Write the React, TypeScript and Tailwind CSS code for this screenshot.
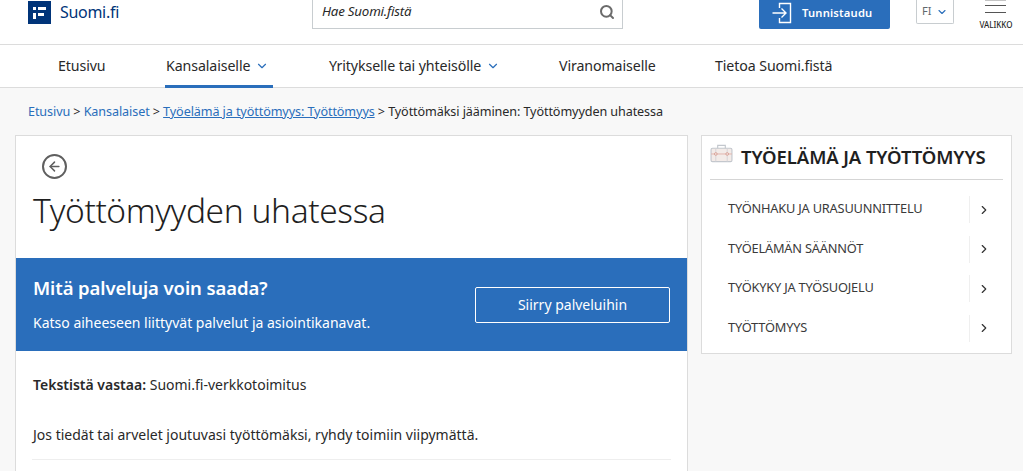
import React from 'react';
import { ChevronDown, ChevronRight, Search, ArrowLeft } from 'lucide-react';

const navItems = [
  { label: 'Etusivu', width: 'w-[47px]', left: 'ml-[58px]' },
  { label: 'Kansalaiselle', width: 'w-[108px]', left: 'ml-[60px]', open: true, active: true },
  { label: 'Yritykselle tai yhteisölle', width: 'w-[169px]', left: 'ml-[56px]', open: true },
  { label: 'Viranomaiselle', width: 'w-[96px]', left: 'ml-[61px]' },
  { label: 'Tietoa Suomi.fistä', width: 'w-[118px]', left: 'ml-[60px]' },
];

const topics = ['TYÖNHAKU JA URASUUNNITTELU', 'TYÖELÄMÄN SÄÄNNÖT', 'TYÖKYKY JA TYÖSUOJELU', 'TYÖTTÖMYYS'];

const BriefcaseIcon = () => (
  <svg width="23" height="19" viewBox="0 0 24 20" fill="none" className="shrink-0 -mt-[8px]">
    <rect x="1" y="4.5" width="22" height="14" rx="1.5" fill="#f3ebe8" stroke="#c3c7cd" strokeWidth="1.2" />
    <path d="M8 4.5V1.5h8v3" stroke="#c3c7cd" strokeWidth="1.2" />
    <path d="M1 10.5h22" stroke="#e2b4ac" strokeWidth="1" />
    <path d="M6 4.5v14M18 4.5v14" stroke="#d5d3d6" strokeWidth="1" />
    <circle cx="6" cy="10.5" r="1.4" fill="#f3ebe8" stroke="#d99e94" />
    <circle cx="18" cy="10.5" r="1.4" fill="#f3ebe8" stroke="#d99e94" />
  </svg>
);

const LoginIcon = () => (
  <svg width="22" height="22" viewBox="0 0 22 22" fill="none" stroke="#fff" strokeWidth="1.4">
    <path d="M7.5 6V1.5h11v19h-11V16" />
    <path d="M0.5 11h13M9.5 6.5l4.5 4.5-4.5 4.5" />
  </svg>
);

const App: React.FC = () => {
  return (
    <div className="w-[1023px] h-[471px] overflow-hidden bg-[#f8f8f8] font-['Noto_Sans',sans-serif] text-[#292929]">
      <header className="h-[45px] bg-white border-b border-[#dcdcdc] flex items-start">
        <div className="ml-[28px] mt-px w-[23px] h-[23px] bg-[#003479] flex flex-col justify-center gap-[3px] pl-[5px]">
          <div className="flex gap-[2px]">
            <span className="w-[3px] h-[3px] bg-white" />
            <span className="w-[8px] h-[3px] bg-white" />
          </div>
          <div className="flex gap-[2px]">
            <span className="w-[3px] h-[6px] bg-white" />
            <span className="w-[6px] h-[3px] bg-white" />
          </div>
        </div>
        <span className="ml-[9px] text-[16px] leading-[24px] text-[#003479] tracking-[-0.3px]">Suomi.fi</span>

        <div className="ml-[193px] w-[311px] h-[29px] bg-white border-x border-b border-[#c8cdd0] flex items-center justify-between pl-[9px] pr-[7px] pb-[5px]">
          <span className="italic text-[13.3px] tracking-[-0.2px] text-[#292929]">Hae Suomi.fistä</span>
          <Search size={16} strokeWidth={3} className="text-[#6b6b6b]" />
        </div>

        <button className="ml-[136px] w-[131px] h-[29px] bg-[#2a6ebb] rounded-b-[2px] flex items-center pl-[13px] gap-[8px] pb-[3px]">
          <LoginIcon />
          <span className="text-[11.2px] font-semibold tracking-[0.2px] text-white">Tunnistaudu</span>
        </button>

        <div className="ml-[26px] w-[38px] h-[24px] bg-white border-x border-b border-[#c8cdd0] rounded-b-[2px] flex items-center pl-[5px] gap-[5px]">
          <span className="text-[11px] text-[#5f686d]">FI</span>
          <ChevronDown size={12} strokeWidth={2.2} className="text-[#2a6ebb]" />
        </div>

        {/* menu button, its top bar only just shows at the page edge */}
        <div className="ml-[25px] w-[34px] flex flex-col items-center">
          <span className="w-[21px] h-px bg-[#c4c4c4]" />
          <span className="mt-[4px] w-[21px] h-px bg-[#555]" />
          <span className="mt-[6px] w-[21px] h-px bg-[#555]" />
          <span className="mt-[7px] text-[8px] leading-[10px] font-medium text-[#292929] whitespace-nowrap">VALIKKO</span>
        </div>
      </header>

      <nav className="h-[43px] bg-white border-b border-[#dcdcdc] flex items-stretch">
        {navItems.map((item) => (
          <div
            key={item.label}
            className={`${item.left} ${item.width} flex items-center gap-[5px] border-b-[3px] -mb-px pt-[2px] ${item.active ? 'border-[#2a6ebb] pl-px' : 'border-transparent'}`}
          >
            <span className="text-[14.2px] tracking-[-0.1px] text-[#292929] whitespace-nowrap">{item.label}</span>
            {item.open && <ChevronDown size={14} strokeWidth={2} className="text-[#2a6ebb] shrink-0" />}
          </div>
        ))}
      </nav>

      <div className="pl-[28px] pt-[15px] h-[47px] text-[12.62px] leading-[17px] tracking-[-0.1px] whitespace-nowrap">
        <span className="text-[#2a6ebb]">Etusivu</span>
        <span> &gt; </span>
        <span className="text-[#2a6ebb]">Kansalaiset</span>
        <span> &gt; </span>
        <span className="text-[#2a6ebb] underline">Työelämä ja työttömyys: Työttömyys</span>
        <span> &gt; Työttömäksi jääminen: Työttömyyden uhatessa</span>
      </div>

      <div className="flex items-start pl-[15px] gap-[13px]">
        <main className="w-[673px] h-[400px] bg-white border border-[#dcdcdc]">
          <div className="pl-[26px] pt-[18px]">
            <div className="w-[25px] h-[25px] rounded-full border-2 border-[#5f5f5f] flex items-center justify-center">
              <ArrowLeft size={15} strokeWidth={2.4} className="text-[#5f5f5f]" />
            </div>
          </div>
          <h1 className="pl-[17px] mt-[7px] text-[33.5px] leading-[48px] font-light tracking-[-0.4px] text-[#1f1f1f]">
            Työttömyyden uhatessa
          </h1>
          <section className="mt-[24px] h-[93px] bg-[#2a6ebb] flex items-center justify-between pl-[17px] pr-[17px] text-white">
            <div className="mb-[2px]">
              <h2 className="text-[18.5px] leading-[28px] font-semibold tracking-[-0.1px]">Mitä palveluja voin saada?</h2>
              <p className="mt-[11px] text-[14px] leading-[20px]">Katso aiheeseen liittyvät palvelut ja asiointikanavat.</p>
            </div>
            <button className="w-[195px] h-[36px] border border-white rounded-[2px] text-[14px]">Siirry palveluihin</button>
          </section>
          <p className="pl-[17px] mt-[24px] text-[14px] leading-[20px] text-[#292929]">
            <strong className="font-semibold">Tekstistä vastaa:</strong> Suomi.fi-verkkotoimitus
          </p>
          <p className="pl-[17px] mt-[30px] text-[14px] leading-[20px] text-[#292929]">
            Jos tiedät tai arvelet joutuvasi työttömäksi, ryhdy toimiin viipymättä.
          </p>
          <hr className="mx-[16px] mt-[14px] border-[#eeeeee]" />
        </main>

        <aside className="w-[311px] h-[219px] bg-white border border-[#dcdcdc] px-[8px]">
          <div className="h-[44px] border-b border-[#d5d5d5] flex items-center gap-[8px] pb-[1px]">
            <BriefcaseIcon />
            <h3 className="text-[18.5px] font-semibold tracking-[-0.1px] text-[#1f1f1f] whitespace-nowrap">TYÖELÄMÄ JA TYÖTTÖMYYS</h3>
          </div>
          <ul className="mt-[9px]">
            {topics.map((topic) => (
              <li key={topic} className="h-[39.5px] flex items-center justify-between pl-[18px]">
                <span className="text-[12.8px] tracking-[-0.2px] text-[#3a3a3a] whitespace-nowrap">{topic}</span>
                <span className="w-[29px] h-[27px] mt-[2px] border-l border-[#efefef] flex items-center justify-center mr-[5px]">
                  <ChevronRight size={14} strokeWidth={2} className="text-[#333]" />
                </span>
              </li>
            ))}
          </ul>
        </aside>
      </div>
    </div>
  );
};

export default App;
